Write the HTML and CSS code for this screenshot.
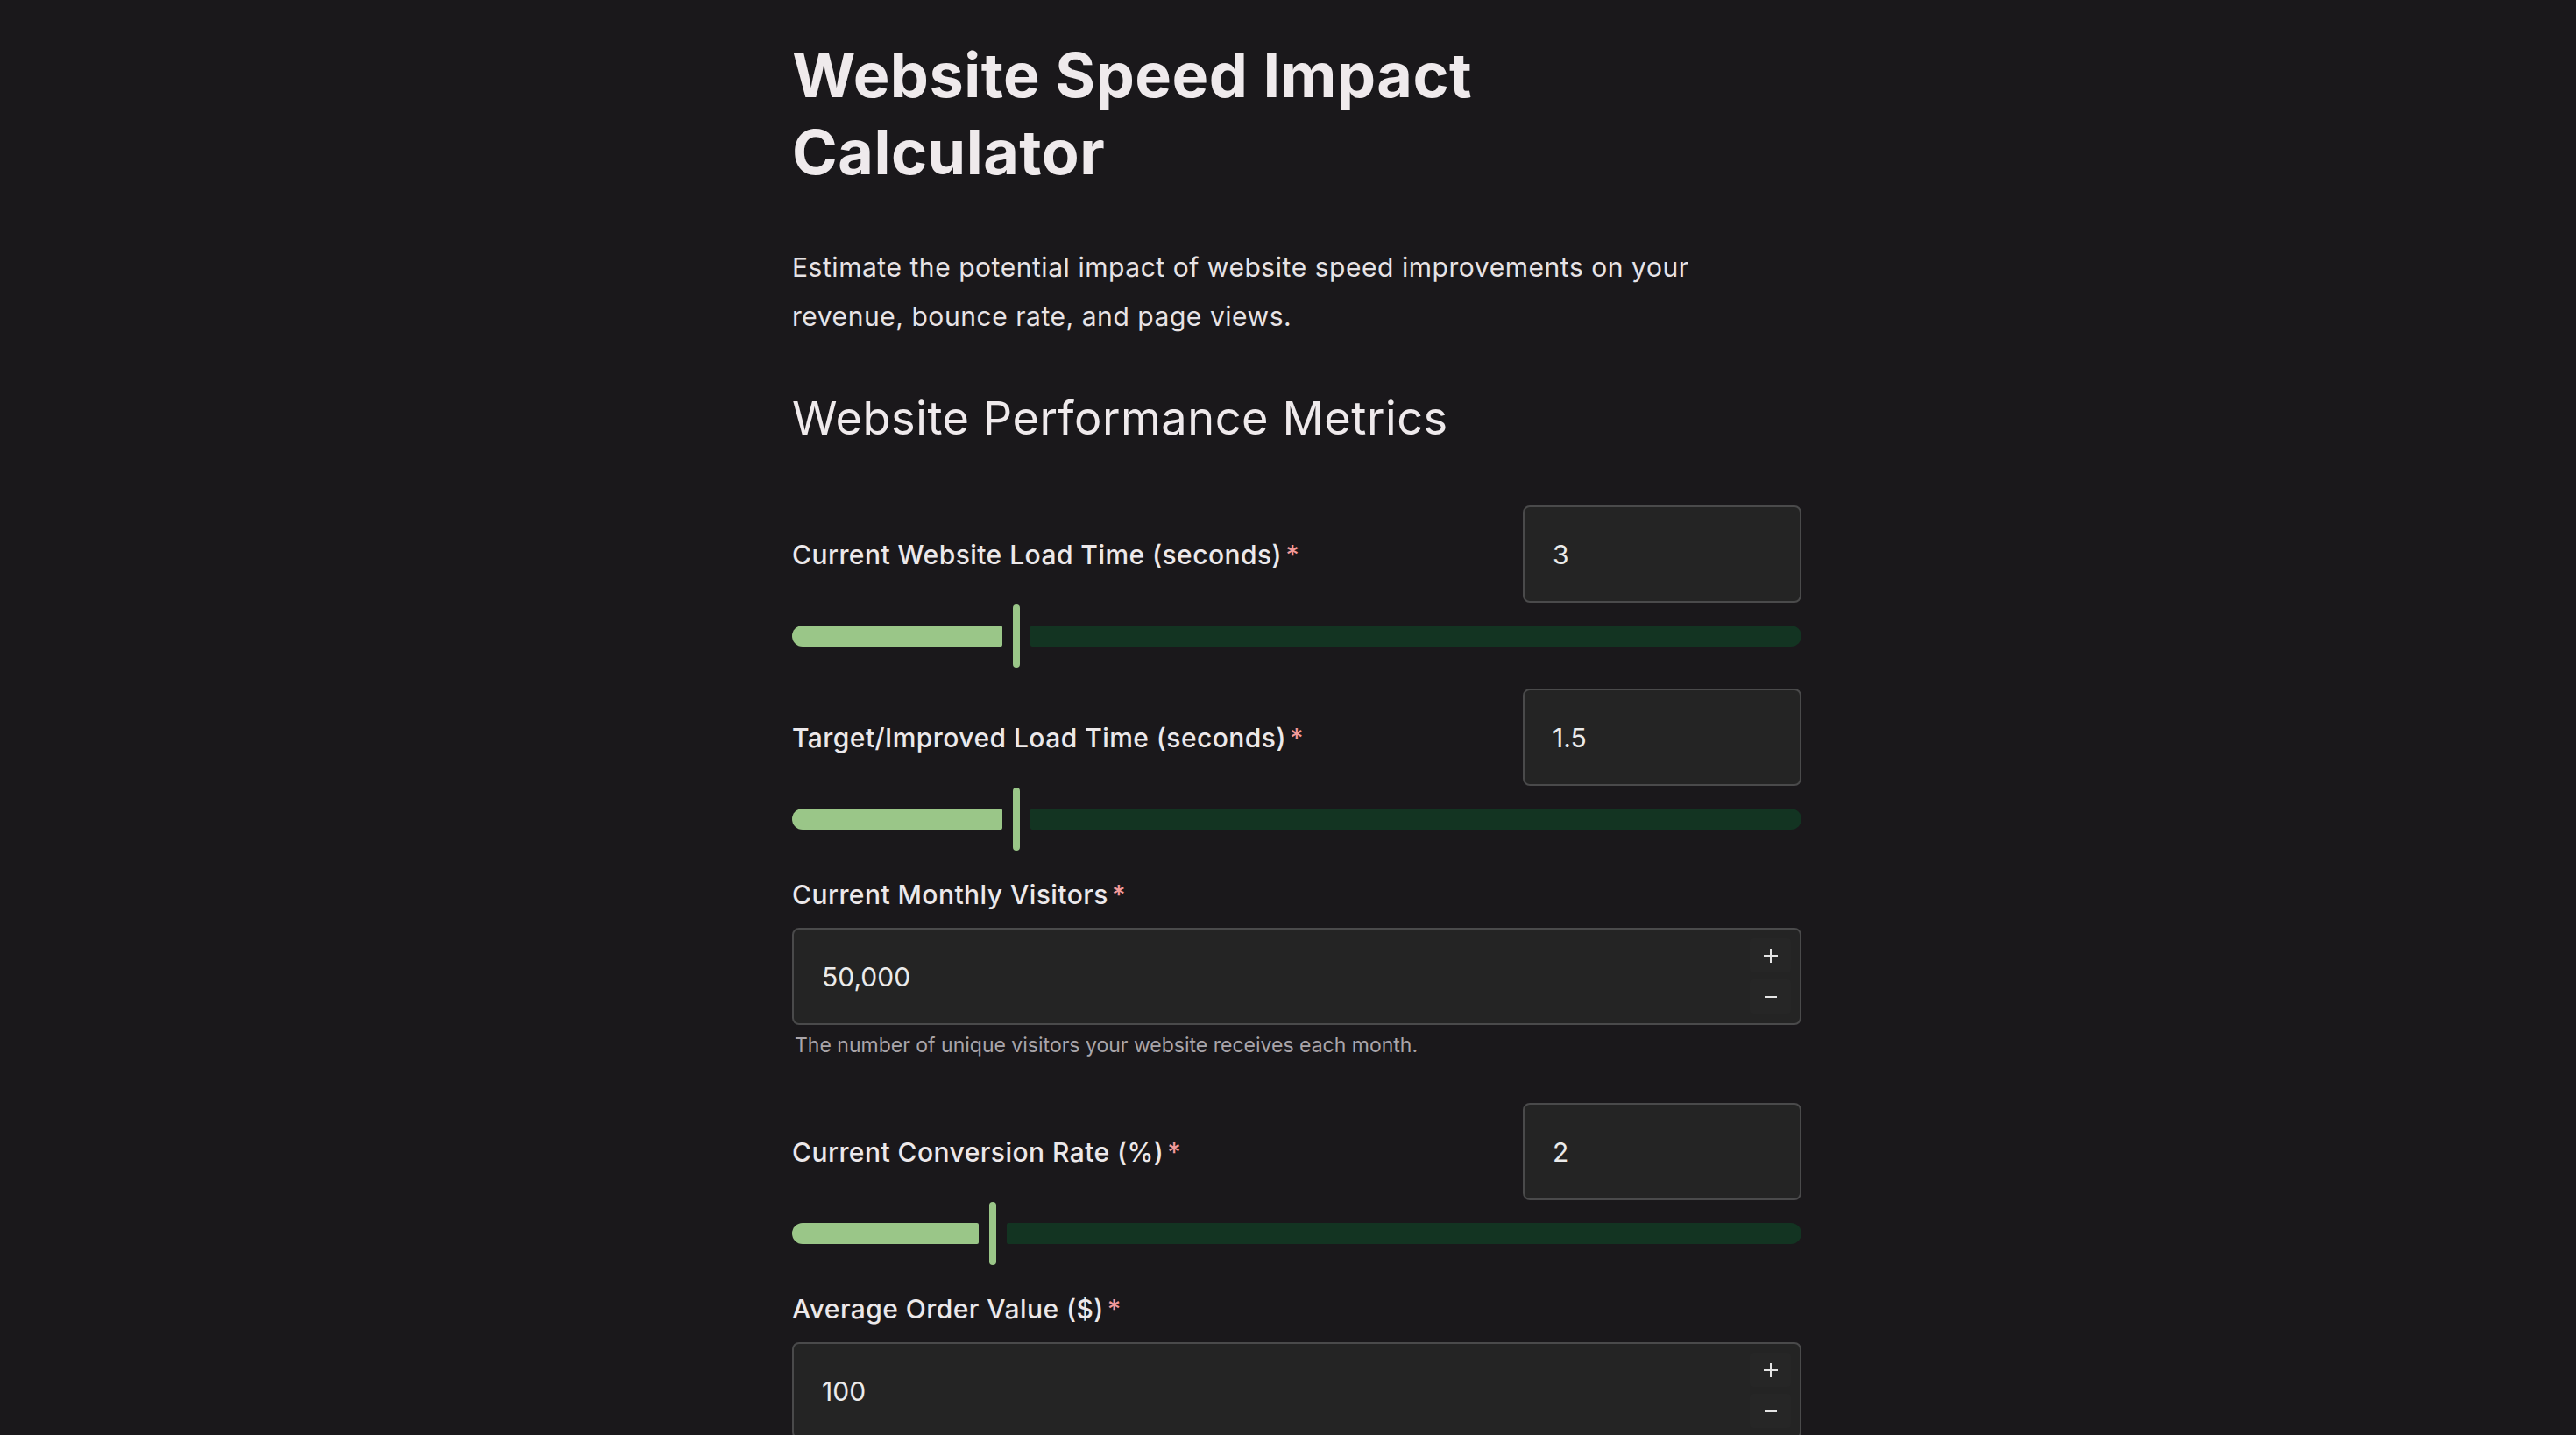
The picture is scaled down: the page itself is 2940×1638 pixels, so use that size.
FILE: index.html
```html
<!DOCTYPE html>
<html lang="en">
<head>
<meta charset="utf-8">
<title>Website Speed Impact Calculator</title>
<link rel="stylesheet" href="styles.css">
</head>
<body>
<main class="page">
  <h1 class="title">Website Speed Impact<br>Calculator</h1>
  <p class="intro">Estimate the potential impact of website speed improvements on your revenue, bounce rate, and page views.</p>
  <h2 class="section-title">Website Performance Metrics</h2>

  <form class="form">
    <div class="field field-slider first">
      <div class="row">
        <label class="label">Current Website Load Time (seconds)<span class="req">*</span></label>
        <div class="small-input">3</div>
      </div>
      <div class="slider">
        <div class="fill" style="width:240px"></div>
        <div class="thumb"></div>
        <div class="rest"></div>
      </div>
    </div>

    <div class="field field-slider">
      <div class="row">
        <label class="label">Target/Improved Load Time (seconds)<span class="req">*</span></label>
        <div class="small-input">1.5</div>
      </div>
      <div class="slider">
        <div class="fill" style="width:240px"></div>
        <div class="thumb"></div>
        <div class="rest"></div>
      </div>
    </div>

    <div class="field field-number">
      <label class="label">Current Monthly Visitors<span class="req">*</span></label>
      <div class="number-input">
        <span class="value">50,000</span>
        <div class="stepper">
          <span class="step"><svg viewBox="0 0 18 18" width="18" height="18"><path d="M9 1v16M1 9h16" stroke="#e4e4e4" stroke-width="2" fill="none"/></svg></span>
          <span class="step"><svg viewBox="0 0 18 18" width="18" height="18"><path d="M2 9h14" stroke="#e4e4e4" stroke-width="2" fill="none"/></svg></span>
        </div>
      </div>
      <p class="help">The number of unique visitors your website receives each month.</p>
    </div>

    <div class="field field-slider after-help">
      <div class="row">
        <label class="label">Current Conversion Rate (%)<span class="req">*</span></label>
        <div class="small-input">2</div>
      </div>
      <div class="slider">
        <div class="fill" style="width:213px"></div>
        <div class="thumb"></div>
        <div class="rest"></div>
      </div>
    </div>

    <div class="field field-number">
      <label class="label">Average Order Value ($)<span class="req">*</span></label>
      <div class="number-input">
        <span class="value">100</span>
        <div class="stepper">
          <span class="step"><svg viewBox="0 0 18 18" width="18" height="18"><path d="M9 1v16M1 9h16" stroke="#e4e4e4" stroke-width="2" fill="none"/></svg></span>
          <span class="step"><svg viewBox="0 0 18 18" width="18" height="18"><path d="M2 9h14" stroke="#e4e4e4" stroke-width="2" fill="none"/></svg></span>
        </div>
      </div>
    </div>
  </form>
</main>
</body>
</html>
```

FILE: styles.css
```css
* { box-sizing: border-box; }

html, body {
  margin: 0;
  padding: 0;
  background: #1a181b;
  color: #ece8ea;
  font-family: Inter, "Noto Sans", "Liberation Sans", sans-serif;
}

.page {
  width: 1172px;
  padding-left: 20px;
  margin: 0 auto;
  padding-bottom: 200px;
}

.title {
  margin: 42px 0 0;
  font-size: 70px;
  line-height: 88px;
  font-weight: 700;
  color: #efeaec;
  letter-spacing: 0.5px;
}

.intro {
  margin: 59px 0 0;
  font-size: 30px;
  line-height: 56px;
  color: #e7e3e6;
  letter-spacing: 0.55px;
  max-width: 1100px;
}

.section-title {
  margin: 56px 0 0;
  font-size: 52.3px;
  line-height: 64px;
  font-weight: 400;
  letter-spacing: 0.55px;
  color: #efeaec;
}

.form {
  display: flex;
  flex-direction: column;
}

.field.first { margin-top: 68px; }
.field-slider { margin-top: 24px; }
.field-number { margin-top: 30px; display: flex; flex-direction: column; }
.field.after-help { margin-top: 50px; }

.row {
  display: flex;
  align-items: center;
  justify-content: space-between;
}

.label {
  font-size: 30px;
  line-height: 40px;
  font-weight: 500;
  color: #ece8ea;
  letter-spacing: 0.45px;
}

.req {
  color: #f29a9a;
  margin-left: 4px;
}

.small-input {
  width: 318px;
  height: 111px;
  border: 2px solid #4a4a4b;
  border-radius: 8px;
  background: #242424;
  display: flex;
  align-items: center;
  padding: 0 32px;
  font-size: 30px;
  color: #ebebeb;
}

.slider {
  margin-top: 2px;
  height: 72px;
  display: flex;
  align-items: center;
  gap: 12px;
}

.fill {
  height: 24px;
  background: #9ac688;
  border-radius: 12px 2px 2px 12px;
  flex: none;
}

.thumb {
  width: 8px;
  height: 72px;
  border-radius: 4px;
  background: #9ac688;
  flex: none;
}

.rest {
  flex: 1;
  height: 24px;
  background: #133422;
  border-radius: 2px 12px 12px 2px;
}

.number-input {
  position: relative;
  margin-top: 18px;
  height: 111px;
  border: 2px solid #4a4a4b;
  border-radius: 8px;
  background: #242424;
  display: flex;
  align-items: center;
  padding: 0 32px;
  font-size: 30px;
  color: #ebebeb;
}

.stepper {
  position: absolute;
  right: 10px;
  top: 10px;
  bottom: 11px;
  width: 47px;
  display: flex;
  flex-direction: column;
  gap: 8px;
}

.step {
  flex: 1;
  display: flex;
  align-items: center;
  justify-content: center;
  background: #262626;
  border-radius: 4px;
}

.help {
  margin: 7px 0 0 3px;
  font-size: 23px;
  line-height: 32px;
  color: #a9a5aa;
}
```
